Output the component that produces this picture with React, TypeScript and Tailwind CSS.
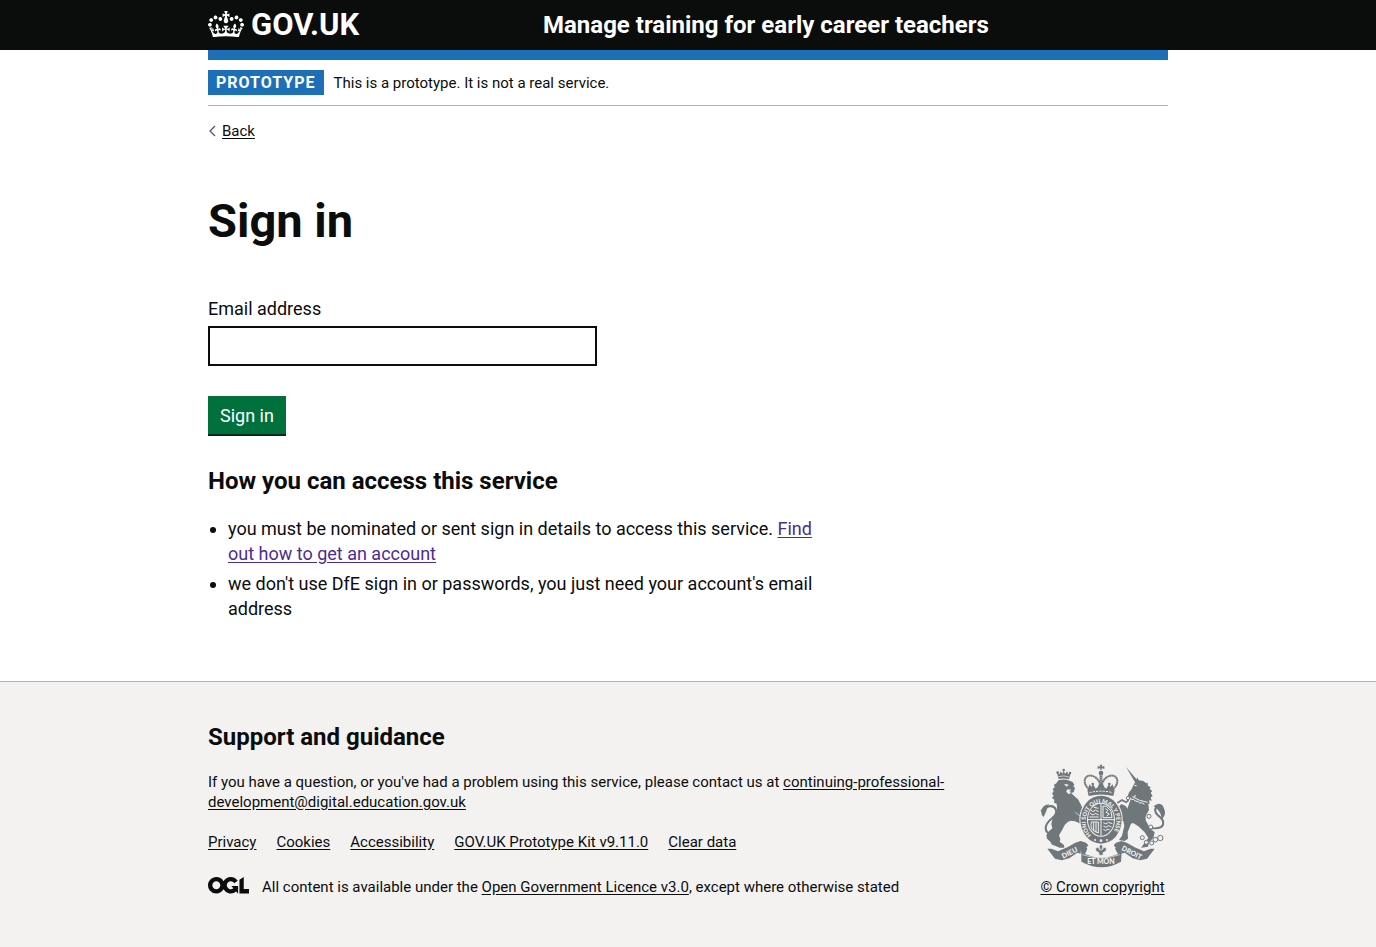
import type { AnchorHTMLAttributes, ReactNode } from "react";

const CROWN_PATH =
  "M25 30.2c3.5 1.5 7.7-.2 9.1-3.7 1.5-3.6-.2-7.8-3.9-9.2-3.6-1.4-7.6.3-9.1 3.9-1.4 3.5.3 7.5 3.9 9zM9 39.5c3.6 1.5 7.8-.2 9.2-3.7 1.5-3.6-.2-7.8-3.9-9.1-3.6-1.5-7.6.2-9.1 3.8-1.4 3.5.3 7.5 3.8 9zM4.4 57.2c3.5 1.5 7.7-.2 9.1-3.8 1.5-3.6-.2-7.7-3.9-9.1-3.5-1.5-7.6.3-9.1 3.8-1.4 3.5.3 7.6 3.9 9.1zm38.3-21.4c3.5 1.5 7.7-.2 9.1-3.8 1.5-3.6-.2-7.7-3.9-9.1-3.6-1.5-7.6.3-9.1 3.8-1.3 3.6.4 7.7 3.9 9.1zm64.4-5.6c-3.6 1.5-7.8-.2-9.1-3.7-1.5-3.6.2-7.8 3.8-9.2 3.6-1.4 7.7.3 9.2 3.9 1.3 3.5-.4 7.5-3.9 9zm15.9 9.3c-3.6 1.5-7.7-.2-9.1-3.7-1.5-3.6.2-7.8 3.7-9.1 3.6-1.5 7.7.2 9.2 3.8 1.5 3.5-.3 7.5-3.8 9zm4.7 17.7c-3.6 1.5-7.8-.2-9.2-3.8-1.5-3.6.2-7.7 3.9-9.1 3.6-1.5 7.7.3 9.2 3.8 1.3 3.5-.4 7.6-3.9 9.1zM89.3 35.8c-3.6 1.5-7.8-.2-9.2-3.8-1.4-3.6.2-7.7 3.9-9.1 3.6-1.5 7.7.3 9.2 3.8 1.4 3.6-.3 7.7-3.9 9.1zM69.7 17.7l8.9 4.7V9.3l-8.9 2.8c-.2-.3-.5-.6-.9-.9L72.4 0H59.6l3.5 11.2c-.3.3-.6.5-.9.9l-8.8-2.8v13.1l8.8-4.7c.3.3.6.7.9.9l-5 15.4v.1c-.2.8-.4 1.6-.4 2.4 0 4.1 3.1 7.5 7 8.1h.2c.3 0 .7.1 1 .1.4 0 .7 0 1-.1h.2c4-.6 7.1-4.1 7.1-8.1 0-.8-.1-1.7-.4-2.4V34l-5.1-15.4c.4-.2.7-.6 1-.9zM66 92.8c16.9 0 32.8 1.1 47.1 3.2 4-16.9 8.9-26.7 14-33.5l-9.6-3.4c1 4.9 1.1 7.2 0 10.2-1.5-1.4-3-4.3-4.2-8.7L108.6 76c2.8-2 5-3.2 7.5-3.3-4.4 9.4-10 11.9-13.6 11.2-4.3-.8-6.3-4.6-5.6-7.9 1-4.7 5.7-5.9 8-.5 4.3-8.7-3-11.4-7.6-8.8 7.1-7.2 7.9-13.5 2.1-21.1-8 6.1-8.1 12.3-4.5 20.8-4.7-5.4-12.1-2.5-9.5 6.2 3.4-5.2 7.9-2 7.2 3.1-.6 4.3-6.4 7.8-13.5 7.2-10.3-.9-10.9-8-11.2-13.8 2.5-.5 7.1 1.8 11 7.3L80.2 60c-4.1 4.4-8 5.3-12.3 5.4 1.4-4.4 8-11.6 8-11.6H55.5s6.4 7.2 7.9 11.6c-4.2-.1-8-1-12.3-5.4l1.4 16.4c3.9-5.5 8.5-7.7 10.9-7.3-.3 5.8-.9 12.8-11.1 13.8-7.2.6-12.9-2.9-13.5-7.2-.7-5 3.8-8.3 7.1-3.1 2.7-8.7-4.6-11.6-9.4-6.2 3.7-8.5 3.6-14.7-4.6-20.8-5.8 7.6-5 13.9 2.2 21.1-4.7-2.6-11.9.1-7.7 8.8 2.3-5.5 7.1-4.2 8.1.5.7 3.3-1.3 7.1-5.7 7.9-3.5.7-9-1.8-13.5-11.2 2.5.1 4.7 1.3 7.5 3.3l-4.7-15.4c-1.2 4.4-2.7 7.2-4.3 8.7-1.1-3-.9-5.3 0-10.2l-9.5 3.4c5 6.9 9.9 16.7 14 33.5 14.8-2.1 30.8-3.2 47.7-3.2z";

const OGL_PATH =
  "M421.5 142.8V.1l-50.7 32.3v161.1h112.4v-50.7zm-122.3-9.6A47.12 47.12 0 0 1 221 97.8c0-26 21.1-47.1 47.1-47.1 16.7 0 31.4 8.7 39.7 21.8l42.7-27.2A97.63 97.63 0 0 0 268.1 0c-36.5 0-68.3 20.1-85.1 49.7A98 98 0 0 0 97.8 0C43.9 0 0 43.9 0 97.8s43.9 97.8 97.8 97.8c36.5 0 68.3-20.1 85.1-49.7a97.76 97.76 0 0 0 149.6 25.4l19.4 22.2h3v-87.8h-80l24.3 27.5zM97.8 145c-26 0-47.1-21.1-47.1-47.1s21.1-47.1 47.1-47.1 47.1 21.1 47.1 47.1S123.8 145 97.8 145";

const footerLinks = ["Privacy", "Cookies", "Accessibility", "GOV.UK Prototype Kit v9.11.0", "Clear data"];

function Container({ children }: { children: ReactNode }) {
  return <div className="mx-auto w-full max-w-[990px] px-[15px]">{children}</div>;
}

function TextLink({ children, ...rest }: AnchorHTMLAttributes<HTMLAnchorElement>) {
  return (
    <a className="underline underline-offset-2" {...rest}>
      {children}
    </a>
  );
}

function RoyalArms() {
  const ink = "#6f777b";
  const paper = "#f3f2f1";
  return (
    <svg viewBox="30 30 375 306" className="w-[125px] overflow-visible" aria-hidden="true" fill={ink}>
      {/* lion */}
      <path d="M86 72l-5-18 7 4 4-9 5 7 4-9 4 9 7-7 2 9 8-3-5 18q-16-5-31-1z" />
      <circle cx="101" cy="45" r="4" />
      <circle cx="83" cy="53" r="4" />
      <circle cx="120" cy="54" r="4" />
      <path d="M85 65q17-5 32 1" stroke={paper} strokeWidth="2" fill="none" />
      <path d="M85 76q17-6 34 1l9 4 5 8-3 5 5 5-4 13-8 2 9 8 13 12 10 20 6 14 4 16-5 17-9 5-17-7-11-2-9 3-10 10-7 14-10 17 4 12-2 7 13 10 1 8-14 0-12-5-11-4-5-9-10-9-2-11 8-11 10-9-3-13 3-14 11-19 3-18-1-10-8-3 1-9-7-5 5-7-5-6 5-7-3-7 6-5-2-8 7-4z" />
      <path d="M104 88l11 2-6 4zM112 104l10 1-4 3 3 5-4 4-7-6z" stroke={paper} strokeWidth="2" fill={paper} />
      <path d="M82 231Q49 243 47 220q0-15 20-31 16-13 10-26-6-12-19-9-10 2-17 11" fill="none" stroke={ink} strokeWidth="6" />
      <path d="M58 148q-8 14-10 22l-7 16q-8-7-7-15-5-4 1-8 3-10 15-14z" />
      <path d="M136 172q10 10 20 12M116 203q20-7 34 4" fill="none" stroke={paper} strokeWidth="2" />
      {/* unicorn */}
      <path d="M288 36l36 42-8 5z" />
      <path d="M319 76l3-9 4 9 14 2 9 7 3-3 2 10 8 5-3 4 8 8-5 4 6 11-6 3 3 10-8-1 2 10q-24 4-46-14l5-12-8 3-9 5-8-3 3-11 9-12 4-9z" />
      <path d="M306 121q18 13 49 18l-2 8q-31-4-51-19z" />
      <path d="M303 130q23 16 52 17l2 18-10 18 0 13 13 24 14 12-4 17-13 13-3 13-21 3 11-15 11-14-11-17-19-18-16-10-6 2-10 26 1 19-10 7-17-3 9-13 7-30-3-13-22-9-11-19 13-3 7 11 8-6-9-17 8-9 13 6 5 8z" />
      <path d="M307 125q20 13 46 17M304 134q7-5 13 5 7-3 12 5 8-3 14 4" fill="none" stroke={paper} strokeWidth="3" />
      <path d="M313 91l7 1" fill="none" stroke={paper} strokeWidth="3" />
      <path d="M351 218q43 7 48-9 4-14-14-27-16-14-5-27 8-8 18 0" fill="none" stroke={ink} strokeWidth="6" />
      <path d="M371 154q14-12 23-5 8 6 11 22 1 12-11 24 2-14-7-26-7-9-16-15z" />
      <path d="M262 144l14-9 12 7 8-7M270 158l-8 10 9 13 13 5" fill="none" stroke={ink} strokeWidth="5" />
      <g fill={paper} stroke={ink} strokeWidth="3">
        <circle cx="294" cy="129" r="5" />
        <circle cx="357" cy="184" r="6" />
        <circle cx="362" cy="216" r="6" />
        <circle cx="337" cy="248" r="6" />
        <circle cx="349" cy="262" r="6" />
        <circle cx="365" cy="264" r="6" />
        <circle cx="376" cy="254" r="7" />
        <circle cx="391" cy="249" r="8" />
      </g>
      {/* motto ribbon */}
      <path d="M52 281l12 0 20 8 28-12 24-14 16-5 16 5 7 8-7 8-10-4-6 7 0 14-10-3-24 17-23 6-20-5z" />
      <path d="M374 281l-12 0-20 8-28-12-24-14-16-5-16 5-7 8 7 8 10-4 6 7 0 14 10-3 24 17 23 6 20-5z" />
      <path d="M146 275l17-4 9 10-7 16q48 22 99 0l-9-16 10-11 17 4-7 17-2 29q-58 33-119 0v-28z" />
      <path d="M157 299q57 20 112 0" fill="none" stroke={paper} strokeWidth="2" />
      <path d="M213 266q9 9 3 17l-1 3 7-9q10 1 6 11l-9 5v8h-12v-8l-9-5q-4-10 6-11l7 9-1-3q-6-8 3-17z" stroke={paper} strokeWidth="2" />
      <g fill={paper} fontFamily="Lato, sans-serif" fontWeight="900" fontSize="21" textAnchor="middle">
        <text transform="translate(122 300) rotate(-27)">DIEU</text>
        <text transform="translate(302 299) rotate(27)">DROIT</text>
        <text x="213" y="328">ET MON</text>
      </g>
      {/* garter and shield */}
      <ellipse cx="213" cy="194" rx="65" ry="75" fill={paper} />
      <ellipse cx="213" cy="194" rx="62" ry="72" />
      <ellipse cx="213" cy="194" rx="42" ry="51" fill={paper} />
      <ellipse cx="213" cy="194" rx="39" ry="48" />
      <path id="garter" d="M184 240A46 54 0 1 1 242 240" fill="none" />
      <text fill={paper} fontFamily="Lato, sans-serif" fontWeight="900" fontSize="17">
        <textPath href="#garter">HONI SOIT QUI MAL Y PENSE</textPath>
      </text>
      <path d="M213 146v96M174 194h78" stroke={paper} strokeWidth="3" />
      <g fill="none" stroke={paper} strokeWidth="3">
        <path d="M182 165l7 5 7-5 10 5M180 175l9 5 7-5 10 5M178 186h28M192 157l13 3" />
        <path d="M219 153l10 1 14 14 3 20-27 0zM226 161l8 5-6 6 10 5-8 6" />
        <path d="M220 203l8 4 7-5 12 4M220 213l8 4 7-5 9 4M220 223l7 4 7-5 5 3" />
        <path d="M184 201q-4 18 6 26l15 7v-33zM191 202v26M198 202v30" />
      </g>
      <g fill={paper}>
        <circle cx="195" cy="255" r="3" />
        <circle cx="213" cy="257" r="4" />
        <circle cx="231" cy="255" r="3" />
      </g>
      {/* crown */}
      <path d="M176 106q-16-17-13-31 5-19 25-16 13 2 22 14h6q9-12 22-14 20-3 25 16 3 14-13 31z" fill={paper} />
      <path d="M177 103q-18-18-11-33 10-15 30-3 11 8 13 18M249 103q18-18 11-33-10-15-30-3-11 8-13 18" fill="none" stroke={ink} strokeWidth="6" strokeDasharray="6 1" />
      <path d="M213 54v44" stroke={ink} strokeWidth="8" />
      <path d="M213 60v26" stroke={paper} strokeWidth="2" strokeDasharray="3 3" />
      <circle cx="213" cy="54" r="7" />
      <path d="M210 44l1-5-8 3V33l8 2-2-6h8l-2 6 8-2v9l-8-3 1 5z" />
      <path d="M173 107l5-19 7 7 4-8 8 14 6-4 5-12h10l5 12 6 4 8-14 4 8 7-7 5 19q-40-11-80 0z" />
      <circle cx="188" cy="87" r="4" />
      <circle cx="238" cy="87" r="4" />
      <path d="M172 106q41-11 82 0l-4 17q-37-9-74 0z" />
      <path d="M178 113q35-9 70 0" fill="none" stroke={paper} strokeWidth="3" strokeDasharray="7 3" />
    </svg>
  );
}

export default function App() {
  return (
    <div className="min-h-screen bg-[#f3f2f1] font-[Roboto,'Noto_Sans',sans-serif] text-[#0b0c0c]">
      <header className="bg-[#0b0c0c] text-white">
        <Container>
          <div className="flex h-[50px] items-center">
            <div className="flex w-[335px] shrink-0">
              <a href="#" className="flex items-center gap-[7px]">
                <svg viewBox="0 0 132 97" className="mb-[2px] w-9" fill="currentColor" fillRule="evenodd" aria-hidden="true">
                  <path d={CROWN_PATH} />
                </svg>
                <span className="text-[31px] leading-[30px] font-bold">GOV.UK</span>
              </a>
            </div>
            <a href="#" className="text-2xl leading-[25px] font-bold">
              Manage training for early career teachers
            </a>
          </div>
        </Container>
      </header>

      <div className="bg-white">
        <Container>
          <div className="h-[10px] bg-[#1d70b8]" />
          <div className="flex items-center gap-[10px] border-b border-[#b1b4b6] py-[10px]">
            <strong className="bg-[#1d70b8] px-2 text-base leading-[25px] font-bold tracking-[1px] text-white">
              PROTOTYPE
            </strong>
            <span className="text-[15px] leading-5">This is a prototype. It is not a real service.</span>
          </div>

          <div className="flex pt-[15px]">
            <a href="#" className="flex items-center gap-[6px] text-[15px] leading-5">
              <svg viewBox="0 0 8 12" className="w-2" fill="none" stroke="#505a5f" strokeWidth="1.3" aria-hidden="true">
                <path d="M7 1 2 6l5 5" />
              </svg>
              <span className="underline underline-offset-2">Back</span>
            </a>
          </div>

          <main className="max-w-[630px] pt-[55px] pb-[60px]">
            <h1 className="mb-[50px] text-[47px] leading-[50px] font-bold">Sign in</h1>
            <form onSubmit={(event) => event.preventDefault()}>
              <label htmlFor="email" className="mb-[5px] block text-lg leading-[25px]">
                Email address
              </label>
              <input
                id="email"
                type="email"
                className="block h-10 w-full max-w-[389px] rounded-none border-2 border-[#0b0c0c] bg-white p-[5px] text-lg"
              />
              <button
                type="submit"
                className="mt-[30px] block border-b-2 border-[#002d18] bg-[#00703c] px-3 pt-[10px] pb-[9px] text-lg leading-[19px] text-white"
              >
                Sign in
              </button>
            </form>
            <h2 className="mt-[30px] mb-5 text-2xl leading-[30px] font-bold">How you can access this service</h2>
            <ul className="list-disc space-y-[5px] pl-5 text-lg leading-[25px]">
              <li>
                you must be nominated or sent sign in details to access this service.{" "}
                <a href="#" className="text-[#4c2c92] underline underline-offset-2">
                  Find out how to get an account
                </a>
              </li>
              <li>we don't use DfE sign in or passwords, you just need your account's email address</li>
            </ul>
          </main>
        </Container>
      </div>

      <footer className="border-t border-[#b1b4b6] pt-10 pb-[50px] text-[15px] leading-5">
        <Container>
          <div className="flex items-end justify-between gap-[30px]">
            <div className="max-w-[770px]">
              <h2 className="mb-5 text-2xl leading-[30px] font-bold">Support and guidance</h2>
              <p className="mb-5">
                If you have a question, or you've had a problem using this service, please contact us at{" "}
                <TextLink href="#">continuing-professional-development@digital.education.gov.uk</TextLink>
              </p>
              <ul className="mb-[25px] flex flex-wrap gap-x-5">
                {footerLinks.map((label) => (
                  <li key={label}>
                    <TextLink href="#">{label}</TextLink>
                  </li>
                ))}
              </ul>
              <div className="flex items-start gap-[13px]">
                <svg viewBox="0 0 483.2 195.7" className="w-[41px] shrink-0" fill="currentColor" aria-hidden="true">
                  <path d={OGL_PATH} />
                </svg>
                <span>
                  All content is available under the <TextLink href="#">Open Government Licence v3.0</TextLink>, except
                  where otherwise stated
                </span>
              </div>
            </div>
            <a href="#" className="flex w-[131px] shrink-0 flex-col items-center gap-[10px]">
              <RoyalArms />
              <span className="underline underline-offset-2">© Crown copyright</span>
            </a>
          </div>
        </Container>
      </footer>
    </div>
  );
}
